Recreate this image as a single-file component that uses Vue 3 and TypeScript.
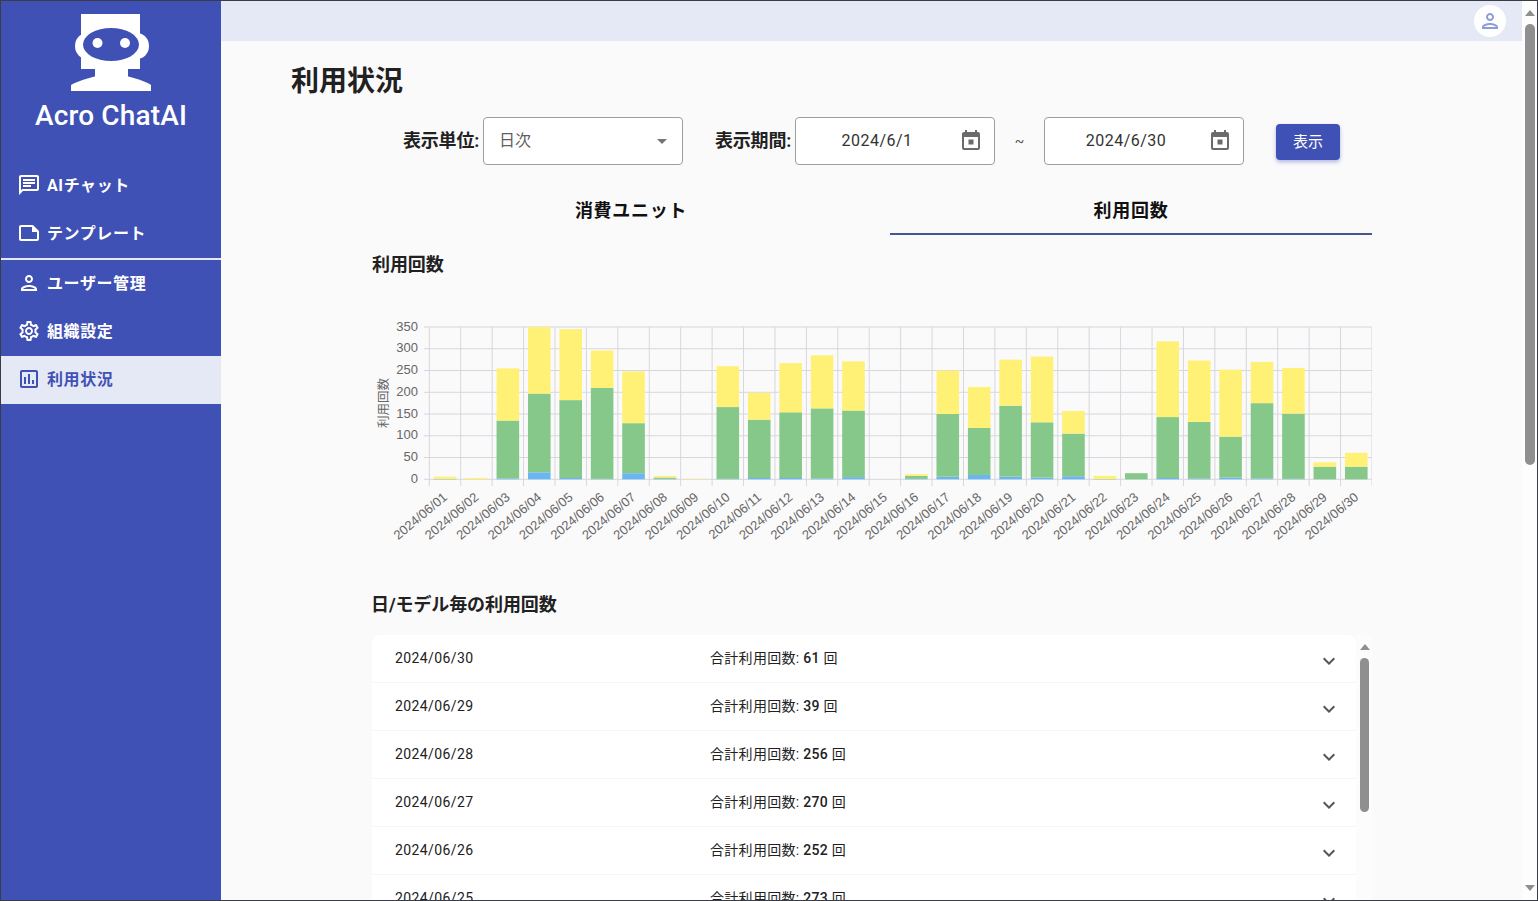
<script setup lang="ts">
import { computed } from 'vue';

interface NavItem {
  label: string;
  icon: string;
  active?: boolean;
}

const icons = {
  chat: 'M20 2H4c-1.1 0-2 .9-2 2v18l4-4h14c1.1 0 2-.9 2-2V4c0-1.1-.9-2-2-2zm0 14H5.17L4 17.17V4h16v12zM6 12h8v2H6zm0-3h12v2H6zm0-3h12v2H6z',
  note: 'M16 4H4c-1.1 0-2 .9-2 2v12.01c0 1.1.9 1.99 2 1.99h16c1.1 0 2-.9 2-2v-8l-6-6zM4 18.01V6h11v5h5v7.01H4z',
  person: 'M12 6c1.1 0 2 .9 2 2s-.9 2-2 2-2-.9-2-2 .9-2 2-2m0 10c2.7 0 5.8 1.29 6 2H6c.23-.72 3.31-2 6-2m0-12C9.79 4 8 5.79 8 8s1.79 4 4 4 4-1.79 4-4-1.79-4-4-4zm0 10c-2.67 0-8 1.34-8 4v2h16v-2c0-2.66-5.33-4-8-4z',
  gear: 'M19.43 12.98c.04-.32.07-.64.07-.98 0-.34-.03-.66-.07-.98l2.11-1.65c.19-.15.24-.42.12-.64l-2-3.46c-.09-.16-.26-.25-.44-.25-.06 0-.12.01-.17.03l-2.49 1c-.52-.4-1.08-.73-1.69-.98l-.38-2.65C14.46 2.18 14.25 2 14 2h-4c-.25 0-.46.18-.49.42l-.38 2.65c-.61.25-1.17.59-1.69.98l-2.49-1c-.06-.02-.12-.03-.18-.03-.17 0-.34.09-.43.25l-2 3.46c-.13.22-.07.49.12.64l2.11 1.65c-.04.32-.07.65-.07.98 0 .33.03.66.07.98l-2.11 1.65c-.19.15-.24.42-.12.64l2 3.46c.09.16.26.25.44.25.06 0 .12-.01.17-.03l2.49-1c.52.4 1.08.73 1.69.98l.38 2.65c.03.24.24.42.49.42h4c.25 0 .46-.18.49-.42l.38-2.65c.61-.25 1.17-.59 1.69-.98l2.49 1c.06.02.12.03.18.03.17 0 .34-.09.43-.25l2-3.46c.12-.22.07-.49-.12-.64l-2.11-1.65zm-1.98-1.71c.04.31.05.52.05.73 0 .21-.02.43-.05.73l-.14 1.13.89.7 1.08.84-.7 1.21-1.27-.51-1.04-.42-.9.68c-.43.32-.84.56-1.25.73l-1.06.43-.16 1.13-.2 1.35h-1.4l-.19-1.35-.16-1.13-1.06-.43c-.43-.18-.83-.41-1.23-.71l-.91-.7-1.06.43-1.27.51-.7-1.21 1.08-.84.89-.7-.14-1.13c-.03-.31-.05-.54-.05-.74s.02-.43.05-.73l.14-1.13-.89-.7-1.08-.84.7-1.21 1.27.51 1.04.42.9-.68c.43-.32.84-.56 1.25-.73l1.06-.43.16-1.13.2-1.35h1.39l.19 1.35.16 1.13 1.06.43c.43.18.83.41 1.23.71l.91.7 1.06-.43 1.27-.51.7 1.21-1.07.85-.89.7.14 1.13zM12 8c-2.21 0-4 1.79-4 4s1.79 4 4 4 4-1.79 4-4-1.79-4-4-4zm0 6c-1.1 0-2-.9-2-2s.9-2 2-2 2 .9 2 2-.9 2-2 2z',
  chart: 'M19 3H5c-1.1 0-2 .9-2 2v14c0 1.1.9 2 2 2h14c1.1 0 2-.9 2-2V5c0-1.1-.9-2-2-2zm0 16H5V5h14v14zM7 10h2v7H7zm4-3h2v10h-2zm4 6h2v4h-2z',
  calendar: 'M9.5 10.5h5v5h-5zM19 19H5V8h14M19 3h-1V1h-2v2H8V1H6v2H5c-1.11 0-2 .9-2 2v14a2 2 0 0 0 2 2h14a2 2 0 0 0 2-2V5a2 2 0 0 0-2-2z',
};

const navTop: NavItem[] = [
  { label: 'AIチャット', icon: icons.chat },
  { label: 'テンプレート', icon: icons.note },
];
const navBottom: NavItem[] = [
  { label: 'ユーザー管理', icon: icons.person },
  { label: '組織設定', icon: icons.gear },
  { label: '利用状況', icon: icons.chart, active: true },
];

// [blue, green, yellow] per day
const usage: number[][] = [
  [0, 1, 5], [0, 0, 3], [2, 133, 120], [16, 181, 153], [3, 179, 163], [1, 209, 86],
  [14, 115, 119], [1, 3, 4], [0, 0, 1], [1, 165, 94], [3, 134, 62], [3, 151, 113],
  [2, 161, 122], [5, 153, 113], [0, 0, 0], [1, 7, 4], [6, 144, 100], [10, 108, 94],
  [6, 163, 106], [4, 127, 151], [7, 98, 52], [0, 1, 7], [0, 14, 0], [3, 140, 174],
  [2, 130, 141], [4, 94, 154], [2, 173, 95], [1, 150, 105], [0, 29, 10], [0, 29, 32],
];

const plot = { left: 429.3, right: 1372, top: 327, bottom: 479.3 };
const step = (plot.right - plot.left) / usage.length;
const unit = (plot.bottom - plot.top) / 350;
const colors = ['#6ab6f3', '#85c88a', '#fff176'];
const yTicks = [0, 50, 100, 150, 200, 250, 300, 350];

const yOf = (v: number): number => plot.bottom - v * unit;
const xOf = (i: number): number => plot.left + i * step;

const xTicks = computed(() => Array.from({ length: usage.length + 1 }, (_, i) => xOf(i)));

const bars = computed(() =>
  usage.flatMap((day, i) => {
    let sum = 0;
    return day.map((value, s) => {
      const rect = {
        key: `${i}-${s}`,
        x: xOf(i) + 4.4,
        y: yOf(sum + value),
        h: value * unit,
        fill: colors[s],
      };
      sum += value;
      return rect;
    });
  }),
);

const labels = usage.map((_, i) => `2024/06/${String(i + 1).padStart(2, '0')}`);

const rows = [
  { date: '2024/06/30', total: 61 },
  { date: '2024/06/29', total: 39 },
  { date: '2024/06/28', total: 256 },
  { date: '2024/06/27', total: 270 },
  { date: '2024/06/26', total: 252 },
  { date: '2024/06/25', total: 273 },
];
</script>

<template>
  <div class="app">
    <aside class="sidebar">
      <div class="brand">
        <svg class="logo" viewBox="66 13 90 78" width="90" height="78">
          <rect x="81" y="14" width="59" height="55" fill="#fff" />
          <ellipse cx="87" cy="46" rx="12" ry="13" fill="#fff" />
          <ellipse cx="137" cy="46" rx="12" ry="13" fill="#fff" />
          <rect x="95" y="65" width="33" height="15" fill="#fff" />
          <path d="M71 91V85C78 81 88 78 97 76H126C135 78 145 81 151 85V91Z" fill="#fff" />
          <ellipse cx="111" cy="44.5" rx="28" ry="16.5" fill="#3f51b5" />
          <circle cx="97.5" cy="43" r="5" fill="#fff" />
          <circle cx="125" cy="43" r="5" fill="#fff" />
        </svg>
        <div class="brand-name">Acro ChatAI</div>
      </div>
      <nav class="nav-group">
        <a v-for="item in navTop" :key="item.label" class="nav-item">
          <svg class="nav-icon" viewBox="0 0 24 24"><path :d="item.icon" /></svg>
          <span>{{ item.label }}</span>
        </a>
      </nav>
      <div class="nav-divider"></div>
      <nav class="nav-group lower">
        <a
          v-for="item in navBottom"
          :key="item.label"
          class="nav-item"
          :class="{ active: item.active }"
        >
          <svg class="nav-icon" viewBox="0 0 24 24"><path :d="item.icon" /></svg>
          <span>{{ item.label }}</span>
        </a>
      </nav>
    </aside>

    <div class="main">
      <header class="topbar">
        <div class="avatar">
          <svg viewBox="0 0 24 24" width="24" height="24"><path :d="icons.person" /></svg>
        </div>
      </header>

      <main class="content">
        <h1 class="page-title">利用状況</h1>

        <section class="panel">
          <div class="filters">
            <label class="filter-label">表示単位:</label>
            <div class="field select">
              <span>日次</span>
              <i class="caret"></i>
            </div>
            <label class="filter-label period">表示期間:</label>
            <div class="field date">
              <span class="date-text">2024/6/1</span>
              <svg viewBox="0 0 24 24" width="24" height="24"><path :d="icons.calendar" /></svg>
            </div>
            <span class="tilde">~</span>
            <div class="field date">
              <span class="date-text">2024/6/30</span>
              <svg viewBox="0 0 24 24" width="24" height="24"><path :d="icons.calendar" /></svg>
            </div>
            <button class="show-btn" type="button">表示</button>
          </div>

          <div class="tabs">
            <div class="tab">消費ユニット</div>
            <div class="tab selected">利用回数</div>
          </div>

          <h2 class="section-title first">利用回数</h2>

          <svg class="chart" viewBox="372 278 1000 314" width="1000" height="314">
            <g stroke="#d6d6dd" stroke-width="1">
              <line v-for="t in yTicks" :key="t" x1="424" :x2="plot.right" :y1="yOf(t)" :y2="yOf(t)" />
              <line v-for="x in xTicks" :key="x" :x1="x" :x2="x" :y1="plot.top" y2="486" />
            </g>
            <rect
              v-for="b in bars"
              :key="b.key"
              :x="b.x"
              :y="b.y"
              width="22.6"
              :height="b.h"
              :fill="b.fill"
            />
            <g class="axis-text">
              <text v-for="t in yTicks" :key="t" x="418" :y="yOf(t) + 3.5" text-anchor="end">{{ t }}</text>
              <text
                v-for="(label, i) in labels"
                :key="label"
                :x="xOf(i) + step / 2 + 3"
                y="498.5"
                text-anchor="end"
                :transform="`rotate(-40 ${xOf(i) + step / 2 + 3} 498.5)`"
              >{{ label }}</text>
            </g>
            <text class="axis-title" x="387.5" y="403" text-anchor="middle" transform="rotate(-90 387.5 403)">利用回数</text>
          </svg>

          <h2 class="section-title second">日/モデル毎の利用回数</h2>

          <div class="list-wrap">
            <div class="list">
              <div v-for="row in rows" :key="row.date" class="row">
                <span class="row-date">{{ row.date }}</span>
                <span class="row-total">合計利用回数: <b>{{ row.total }}</b> 回</span>
                <svg class="chevron" viewBox="0 0 24 24" width="24" height="24">
                  <path d="M7.41 8.58 12 13.17l4.59-4.59L18 10l-6 6-6-6z" />
                </svg>
              </div>
            </div>
            <div class="list-scroll">
              <i class="arrow up"></i>
              <div class="list-thumb"></div>
            </div>
          </div>
        </section>
      </main>
    </div>

    <div class="page-scroll">
      <i class="arrow up"></i>
      <div class="page-thumb"></div>
      <i class="arrow down"></i>
    </div>
  </div>
</template>

<style scoped>
.app {
  display: flex;
  width: 1538px;
  height: 901px;
  box-sizing: border-box;
  border: 1px solid #3a3d48;
  overflow: hidden;
  background: #fbfafb;
  color: #212121;
  font-family: Roboto, "Noto Sans CJK JP", sans-serif;
}

.sidebar {
  flex: none;
  width: 220px;
  background: #3f51b5;
  color: #fff;
}

.brand {
  height: 160px;
  display: flex;
  flex-direction: column;
  align-items: center;
  padding-top: 12px;
  box-sizing: border-box;
}

.logo {
  display: block;
}

.brand-name {
  margin-top: 7px;
  font-size: 28px;
  font-weight: 500;
  line-height: 36px;
  letter-spacing: 0.15px;
}

.nav-item {
  display: flex;
  align-items: center;
  height: 48px;
  box-sizing: border-box;
  padding-left: 16px;
  gap: 6px;
  font-size: 16px;
  font-weight: 700;
  letter-spacing: 0.6px;
}

.nav-item span {
  position: relative;
  top: -1px;
}

.lower .nav-item {
  padding-bottom: 2px;
}

.nav-icon {
  width: 24px;
  height: 24px;
  fill: currentColor;
}

.nav-item.active {
  background: #e5e8f5;
  color: #3f51b5;
}

.nav-divider {
  height: 2px;
  margin-top: 1px;
  background: #e5e8f5;
}

.main {
  flex: 1;
  min-width: 0;
  display: flex;
  flex-direction: column;
}

.topbar {
  flex: none;
  height: 40px;
  display: flex;
  align-items: center;
  justify-content: flex-end;
  padding-right: 16px;
  background: #e5e8f5;
}

.avatar {
  width: 32px;
  height: 32px;
  border-radius: 50%;
  background: #fff;
  display: flex;
  align-items: center;
  justify-content: center;
}

.avatar svg {
  fill: #8c9eda;
}

.content {
  flex: 1;
  min-height: 0;
  display: flex;
  flex-direction: column;
}

.page-title {
  margin: 23px 0 0 70px;
  font-size: 28px;
  font-weight: 700;
  line-height: 36px;
}

.panel {
  flex: 1;
  min-height: 0;
  width: 1000px;
  margin: 17px 0 0 151px;
  display: flex;
  flex-direction: column;
}

.filters {
  display: flex;
  align-items: center;
  height: 48px;
  padding-left: 31px;
}

.filter-label {
  font-size: 18px;
  font-weight: 700;
  width: 80px;
  padding-bottom: 4px;
  letter-spacing: -0.2px;
}

.filter-label.period {
  margin-left: 32px;
}

.field {
  width: 200px;
  height: 48px;
  box-sizing: border-box;
  display: flex;
  align-items: center;
  background: #fff;
  border: 1px solid #9e9e9e;
  border-radius: 4px;
  font-size: 16px;
}

.select {
  padding: 0 15px;
  justify-content: space-between;
  color: #5f5f5f;
}

.select span {
  position: relative;
  top: -2px;
}

.caret {
  width: 0;
  height: 0;
  border-left: 5px solid transparent;
  border-right: 5px solid transparent;
  border-top: 5px solid #757575;
}

.date {
  padding: 0 11px 0 15px;
}

.date svg {
  fill: #6b6b6b;
}

.date-text {
  flex: 1;
  padding: 0 16px 2px 0;
  text-align: center;
  letter-spacing: 0.5px;
  color: #333;
}

.tilde {
  width: 49px;
  text-align: center;
  font-size: 14px;
  color: #555;
}

.show-btn {
  width: 64px;
  height: 36px;
  margin: 2px 0 0 32px;
  padding: 0 0 4px;
  border: none;
  border-radius: 4px;
  background: #3f51b5;
  color: #fff;
  font-family: inherit;
  font-size: 15px;
  box-shadow: 0 2px 4px rgba(63, 81, 181, 0.4);
}

.tabs {
  display: grid;
  grid-template-columns: 518px 482px;
  margin-top: 21px;
}

.tab {
  height: 49px;
  box-sizing: border-box;
  padding-top: 13px;
  line-height: 24px;
  text-align: center;
  font-size: 18px;
  font-weight: 700;
  letter-spacing: 0.7px;
  color: #111;
}

.tab.selected {
  border-bottom: 2px solid #47568f;
}

.section-title {
  margin: 0;
  font-size: 18px;
  font-weight: 700;
  line-height: 26px;
  letter-spacing: -0.1px;
}

.section-title.first {
  margin-top: 17px;
}

.section-title.second {
  position: relative;
  left: -1px;
}

.chart {
  display: block;
  flex: none;
}

.axis-text {
  font-family: "Liberation Sans", "Noto Sans CJK JP", sans-serif;
  font-size: 13px;
  fill: #666;
}

.axis-title {
  font-family: "Liberation Sans", "Noto Sans CJK JP", sans-serif;
  font-size: 12.5px;
  fill: #666;
}

.list-wrap {
  flex: 1;
  min-height: 0;
  margin-top: 17px;
  display: flex;
  overflow: hidden;
}

.list {
  flex: 1;
  min-width: 0;
  background: #fff;
  border-radius: 8px 8px 0 0;
}

.row {
  height: 48px;
  box-sizing: border-box;
  display: flex;
  align-items: center;
  padding: 0 15px 0 23px;
  border-bottom: 1px solid #f5f4f6;
  font-size: 14px;
  letter-spacing: 0.4px;
}

.row-date {
  width: 315px;
  position: relative;
  top: -1px;
}

.row-total {
  flex: 1;
  letter-spacing: 0.3px;
  position: relative;
  top: -2px;
}

.row-total b {
  font-weight: 500;
}

.chevron {
  fill: #555;
  margin-top: 5px;
}

.list-scroll {
  flex: none;
  width: 16px;
  padding: 9px 3px 0 4px;
  box-sizing: border-box;
  display: flex;
  flex-direction: column;
  align-items: center;
  background: #fcfcfc;
}

.list-thumb {
  width: 9px;
  height: 154px;
  margin-top: 8px;
  border-radius: 5px;
  background: #8f8f8f;
}

.arrow {
  width: 0;
  height: 0;
  border-left: 5px solid transparent;
  border-right: 5px solid transparent;
}

.arrow.up {
  border-bottom: 6px solid #8f8f8f;
}

.arrow.down {
  border-top: 6px solid #8f8f8f;
}

.page-scroll {
  flex: none;
  width: 15px;
  display: flex;
  flex-direction: column;
  align-items: center;
  padding: 9px 0 9px;
  box-sizing: border-box;
  background: #fdfdfd;
}

.page-thumb {
  width: 10px;
  height: 441px;
  margin-top: 8px;
  margin-bottom: auto;
  border-radius: 5px;
  background: #8f8f8f;
}
</style>

<style>
html,
body {
  margin: 0;
  overflow: hidden;
}
</style>
